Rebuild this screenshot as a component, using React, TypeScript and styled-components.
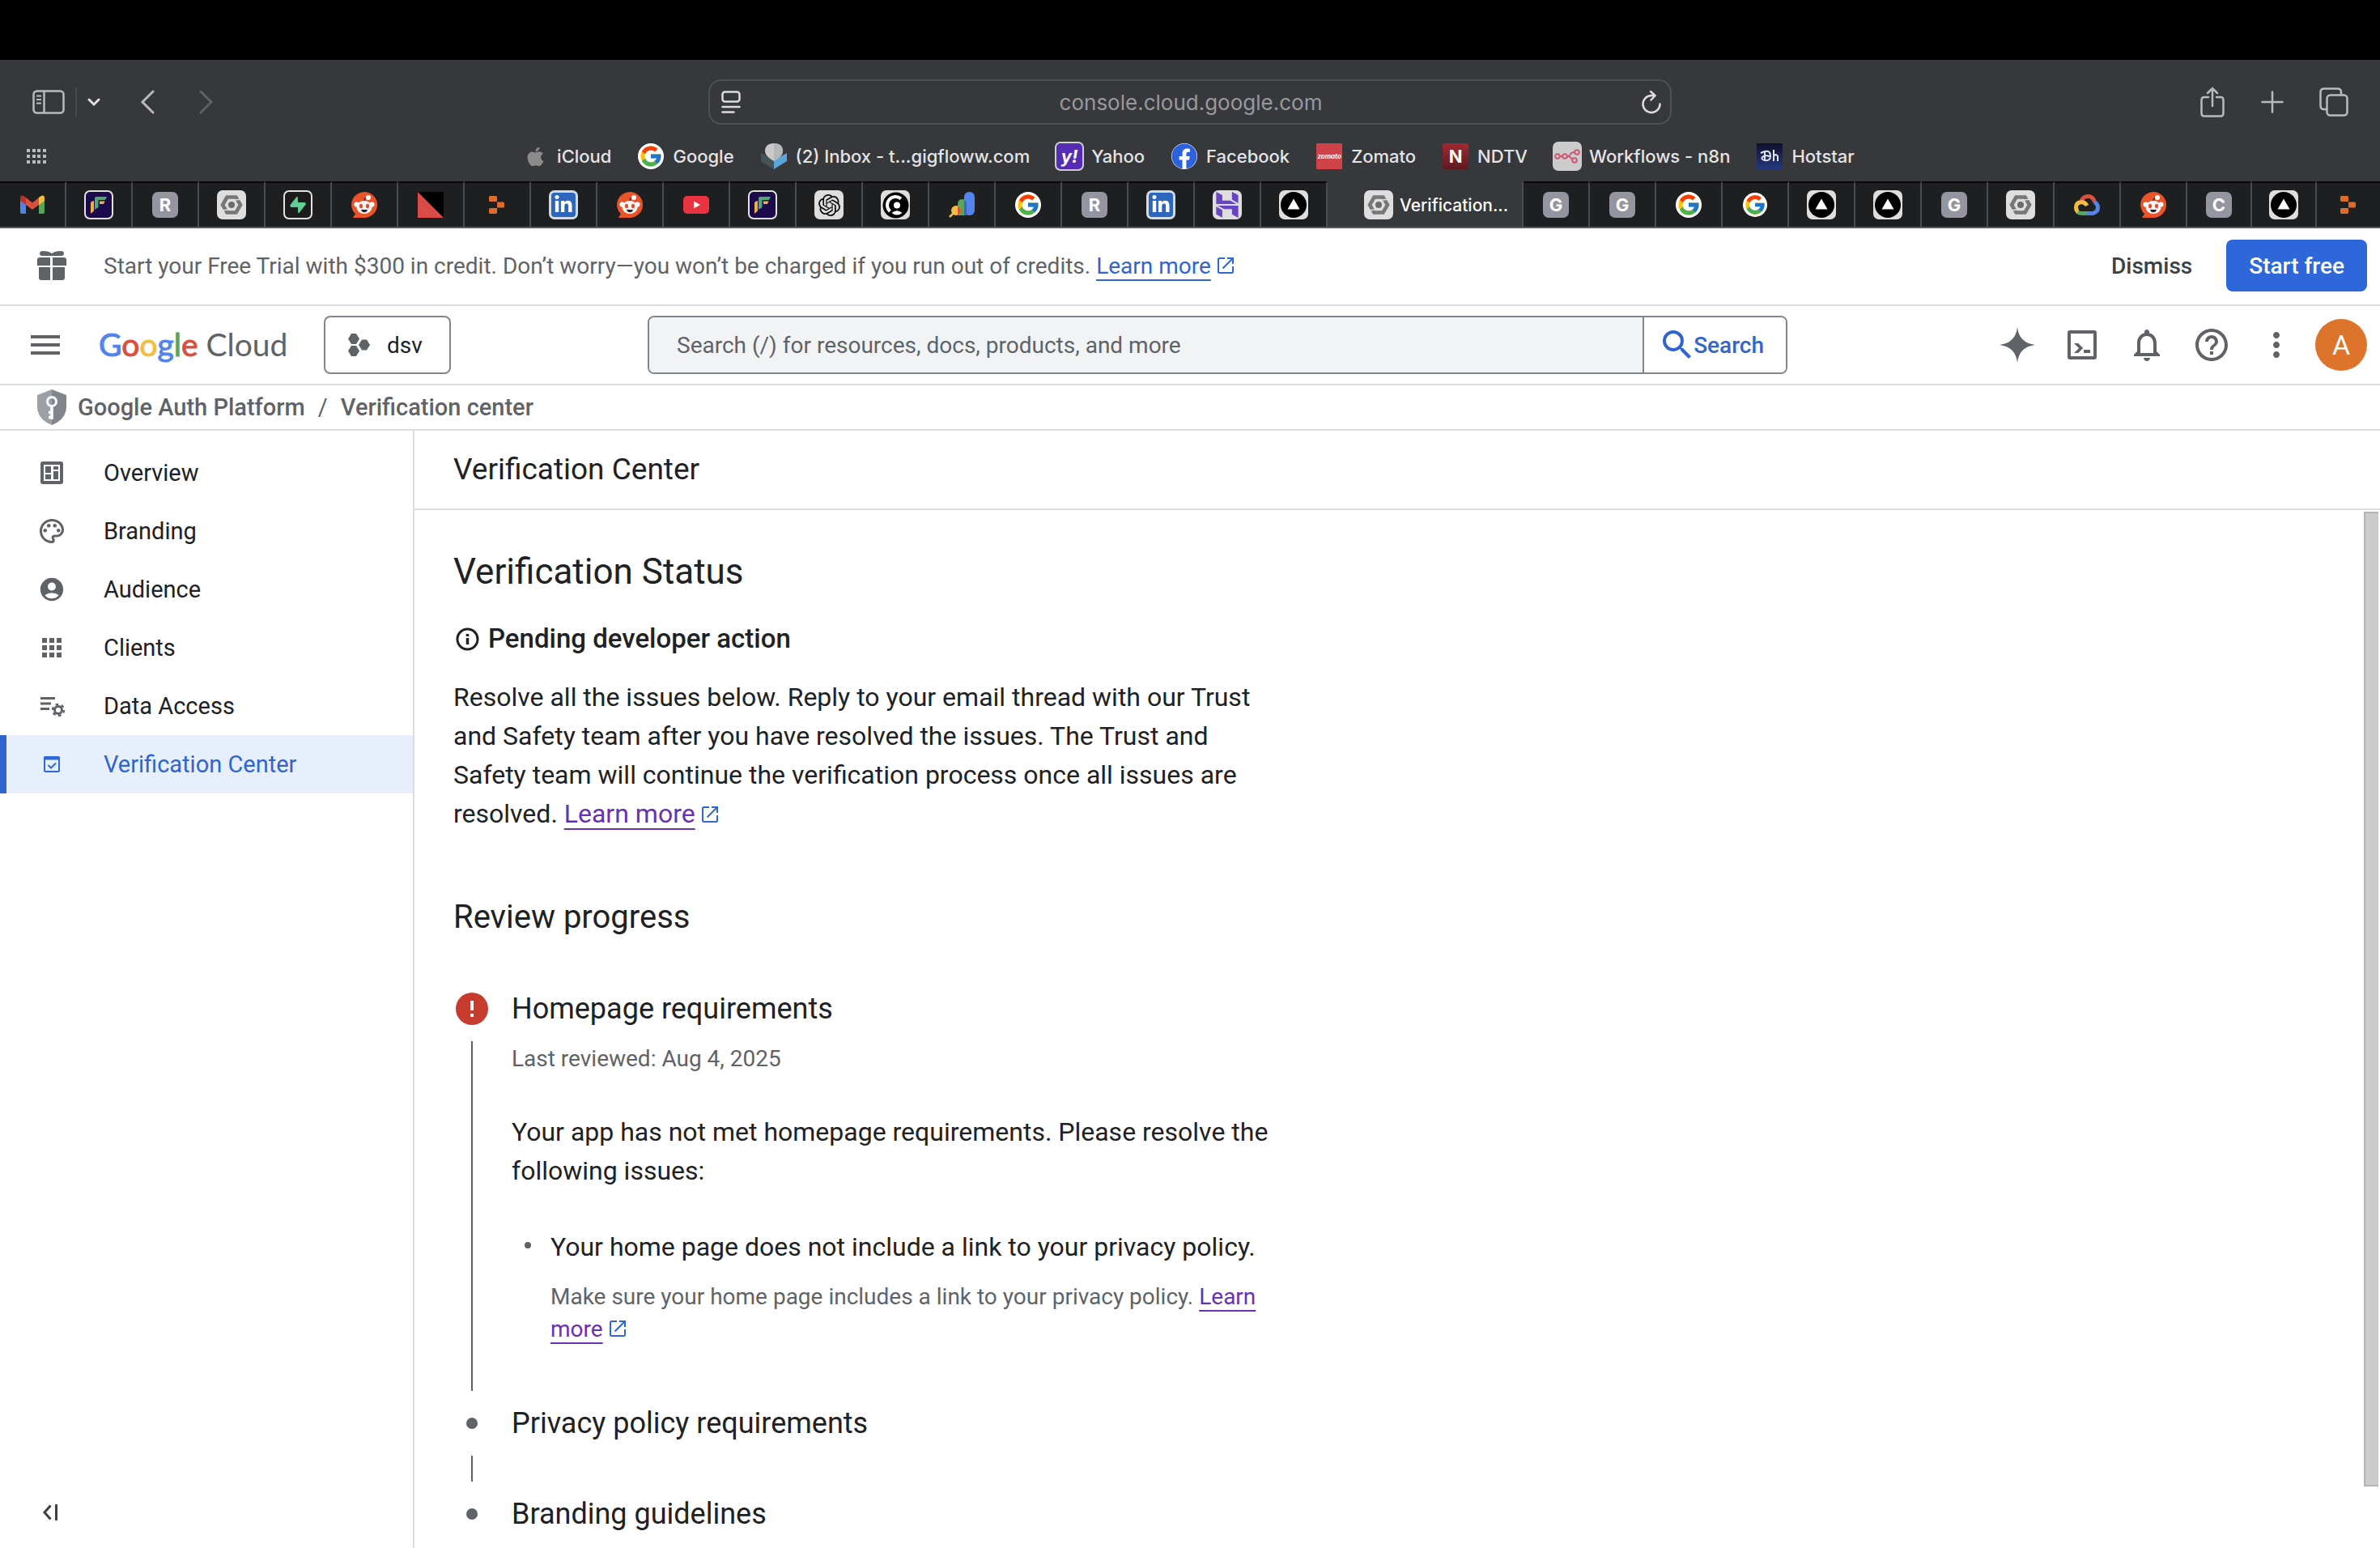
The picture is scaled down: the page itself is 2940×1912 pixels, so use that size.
import React from "react";
import styled, { createGlobalStyle, css } from "styled-components";
import { FcGoogle } from "react-icons/fc";
import { FaApple, FaFacebook, FaLinkedinIn } from "react-icons/fa";
import { SiHostinger, SiOpenai, SiSupabase } from "react-icons/si";
import {
  MdAccountCircle,
  MdApps,
  MdHelpOutline,
  MdMenu,
  MdMoreVert,
  MdOutlineNotifications,
  MdOutlinePalette,
  MdSearch,
} from "react-icons/md";

const c = {
  chrome: "#37383c",
  tab: "#1e1f21",
  tabLine: "#4b4c4e",
  line: "#dadce0",
  ink: "#202124",
  grey: "#5f6368",
  outline: "#80868b",
  blue: "#3064cf",
  button: "#2e67d9",
  visited: "#6b2fb5",
  tile: "#dedede",
};

const ui = `Roboto, "Noto Sans", sans-serif`;
const system = `Inter, "Liberation Sans", sans-serif`;

const GlobalStyle = createGlobalStyle`
  * { box-sizing: border-box; }
  body { margin: 0; background: #fff; color: ${c.ink}; font-family: ${ui}; }
  button, input { font: inherit; color: inherit; margin: 0; }
  h1, h2, h3, p, ul, ol { margin: 0; padding: 0; font-weight: 400; }
  ul, ol { list-style: none; }
  svg { display: block; flex: none; }
`;

const Page = styled.div`
  display: flex;
  flex-direction: column;
  height: 100vh;
  overflow: hidden;
`;

/* ---------- browser window ---------- */

const MenuStrip = styled.div`
  flex: none;
  height: 74px;
  background: #000;
`;

const Chrome = styled.div`
  flex: none;
  background: ${c.chrome};
  font-family: ${system};
  color: #e4e4e5;
`;

const Toolbar = styled.div`
  display: grid;
  grid-template-columns: 1fr minmax(0, 1190px) 1fr;
  align-items: center;
  height: 104px;
  padding: 0 31px;
`;

const ToolGroup = styled.div<{ $end?: boolean }>`
  display: flex;
  align-items: center;
  justify-content: ${(p) => (p.$end ? "flex-end" : "flex-start")};
  gap: ${(p) => (p.$end ? "26px" : "4px")};
`;

const ToolButton = styled.button<{ $w: number; $dim?: boolean }>`
  display: flex;
  align-items: center;
  justify-content: center;
  width: ${(p) => p.$w}px;
  height: 48px;
  padding: 0;
  border: 0;
  background: none;
  color: ${(p) => (p.$dim ? "#606165" : "#b9babc")};
`;

const ToolDivider = styled.span`
  width: 2px;
  height: 36px;
  background: #48494d;
`;

const AddressBar = styled.div`
  display: flex;
  align-items: center;
  height: 56px;
  padding: 0 10px 0 14px;
  border: 2px solid #4f5053;
  border-radius: 16px;
`;

const Address = styled.input`
  flex: 1;
  min-width: 0;
  border: 0;
  background: none;
  outline: 0;
  text-align: center;
  font-size: 26px;
  color: #98999c;
`;

const Bookmarks = styled.nav`
  display: grid;
  grid-template-columns: 1fr auto 1fr;
  align-items: center;
  height: 46px;
  padding: 0 38px 16px 32px;
`;

const BookmarkList = styled.div`
  display: flex;
  align-items: center;
  gap: 31px;
  height: 30px;
`;

const Bookmark = styled.a`
  display: flex;
  align-items: center;
  gap: 9px;
  font-size: 22px;
  font-weight: 500;
  color: #e4e4e5;
  text-decoration: none;
  white-space: nowrap;
`;

const IconSlot = styled.span`
  display: flex;
  align-items: center;
  justify-content: center;
  width: 36px;
  height: 36px;
  flex: none;
`;

const Tabs = styled.div`
  display: flex;
  height: 58px;
  border-bottom: 2px solid #58595b;
`;

const Tab = styled.button<{ $active?: boolean }>`
  display: flex;
  align-items: center;
  justify-content: center;
  gap: 8px;
  min-width: 0;
  padding: 0;
  border: 0;
  border-right: 2px solid ${c.tabLine};
  border-top: 2px solid #08080a;
  background: ${c.tab};
  color: #fff;
  font-size: 21px;
  font-weight: 500;
  white-space: nowrap;
  flex: none;
  width: 82px;
  ${(p) =>
    p.$active &&
    css`
      width: 242px;
      padding-left: 28px;
      background: ${c.chrome};
      border-top-color: ${c.chrome};
    `}
  &:nth-last-child(-n + 3) { flex: 1; }
  &:last-child { border-right: 0; }
`;

const Tile = styled.span<{ $bg: string; $size?: number; $round?: number; $edge?: string }>`
  display: flex;
  align-items: center;
  justify-content: center;
  width: ${(p) => p.$size ?? 36}px;
  height: ${(p) => p.$size ?? 36}px;
  border-radius: ${(p) => p.$round ?? 7}px;
  border: ${(p) => (p.$edge ? `2px solid ${p.$edge}` : "0")};
  background: ${(p) => p.$bg};
  overflow: hidden;
  flex: none;
`;

const Monogram = styled.span<{ $size?: number; $italic?: boolean }>`
  color: #fff;
  font-family: ${system};
  font-size: ${(p) => p.$size ?? 22}px;
  font-weight: 700;
  font-style: ${(p) => (p.$italic ? "italic" : "normal")};
  line-height: 1;
`;

/* ---------- favicons ---------- */

const Letter = ({ ch }: { ch: string }) => (
  <Tile $bg="#9595a1" $size={32}>
    <Monogram>{ch}</Monogram>
  </Tile>
);

const GoogleDisc = ({ size = 32 }: { size?: number }) => (
  <Tile $bg="#fff" $size={size} $round={16}>
    <FcGoogle size={size - 2} />
  </Tile>
);

const Gmail = () => (
  <svg width="30" height="24" viewBox="0 0 30 24">
    <path d="M0 4v17q0 2 2 2h5V10z" fill="#4f83ec" />
    <path d="M30 4v17q0 2-2 2h-5V10z" fill="#58a65c" />
    <path d="M23 3l2.200-1.700Q30-1 30 4v3l-7 5z" fill="#f2be42" />
    <path d="M7 3L4.800 1.300Q0-1 0 4v3l7 5z" fill="#b5332a" />
    <path d="M7 3l8 6.500L23 3v9l-8 6-8-6z" fill="#d95040" />
  </svg>
);

const FlowMark = () => (
  <Tile $bg="#1c0a4c" $edge="#e2e2e2">
    <svg width="32" height="32" viewBox="0 0 32 32">
      <path d="M13 6h13l-2 4h-8.500v9L11 22V8q0-2 2-2z" fill="#4fa873" />
      <path d="M10 11v12.500L6 27V14q0-2 4-3zM17 11.500h6.500l-1.500 3.500h-5z" fill="#eeb03f" />
    </svg>
  </Tile>
);

const AuthNut = () => (
  <Tile $bg={c.tile}>
    <svg width="28" height="26" viewBox="0 0 28 26" fill="none">
      <path d="M8.500 3.500h11L25 13l-5.500 9.500h-11L3 13z" stroke="#777" strokeWidth="4.600" />
      <path d="M18 7l9-1M1 20l9-1" stroke={c.tile} strokeWidth="1.500" />
      <circle cx="14" cy="13" r="4" fill="#6b6b6b" />
    </svg>
  </Tile>
);

const Supabase = () => (
  <Tile $bg="#1c1c1c" $edge="#e2e2e2">
    <SiSupabase size={20} color="#5fcf94" />
  </Tile>
);

const Reddit = () => (
  <svg width="32" height="32" viewBox="0 0 32 32">
    <path d="M16 0a16 16 0 1 1 0 32H3.500q-2 0-.8-1.500L5 27.500A16 16 0 0 1 16 0z" fill="#ea5428" />
    <path d="M16 11q1-5 6-4" fill="none" stroke="#6b2417" strokeWidth="1.500" />
    <circle cx="21" cy="7" r="3" fill="#fff" />
    <circle cx="6.500" cy="15.500" r="3" fill="#fff" />
    <circle cx="25.500" cy="15.500" r="3" fill="#fff" />
    <ellipse cx="16" cy="19" rx="9.500" ry="8" fill="#f4f6f8" />
    <ellipse cx="12" cy="17.500" rx="2" ry="2.800" fill="#e8482a" />
    <ellipse cx="20" cy="17.500" rx="2" ry="2.800" fill="#e8482a" />
    <path d="M12 22h8q-1 3.200-4 3.200T12 22z" fill="#222" />
  </svg>
);

const RedCorner = () => (
  <svg width="32" height="32" viewBox="0 0 32 32">
    <path d="M0 0h32v32H0z" fill="#000" />
    <path d="M0 0v32h32z" fill="#db4b45" />
  </svg>
);

const Replit = () => (
  <svg width="20" height="22" viewBox="0 0 20 22" fill="#e06c2c">
    <path d="M1.500 0h7Q10 0 10 1.500V7H1.500Q0 7 0 5.500v-4Q0 0 1.500 0zM10 7.500h7.500Q19 7.500 19 9v4q0 1.500-1.500 1.500H10zM1.500 15H10v5.500Q10 22 8.500 22h-7Q0 22 0 20.500v-4Q0 15 1.500 15z" />
  </svg>
);

const LinkedIn = () => (
  <Tile $bg="#d5dbe4">
    <Tile $bg="#2d66bd" $size={30} $round={4}>
      <FaLinkedinIn size={24} color="#fff" />
    </Tile>
  </Tile>
);

const YouTube = () => (
  <svg width="32" height="22" viewBox="0 0 32 22">
    <rect width="32" height="22" rx="5" fill="#ea3340" />
    <path d="M13 6.500v9l8-4.500z" fill="#fff" />
  </svg>
);

const OpenAI = () => (
  <Tile $bg={c.tile}>
    <SiOpenai size={27} color="#111" />
  </Tile>
);

const DarkC = () => (
  <Tile $bg={c.tile}>
    <svg width="33" height="33" viewBox="0 0 33 33">
      <circle cx="16.500" cy="16.500" r="16" fill="#000" />
      <path d="M23 8.500A10 10 0 1 0 9.500 24" fill="none" stroke="#fff" strokeWidth="4" />
      <circle cx="18" cy="16.500" r="4" fill="#fff" />
      <path d="M11.500 26q6.500-5.500 13 0-6.500 5-13 0z" fill="#fff" />
    </svg>
  </Tile>
);

const AdChart = () => (
  <svg width="34" height="32" viewBox="0 0 34 32">
    <rect x="20" y="0" width="13" height="29" rx="6" fill="#5383ec" />
    <path d="M12 15q0-6 6-6 5 0 5 6v14H12z" fill="#58a55c" />
    <path d="M20 10q3 1 3 5v14h-3z" fill="#3b66bb" />
    <circle cx="10" cy="23" r="6" fill="#f2bd42" />
    <path d="M12 18q4 1 4 5t-4 6z" fill="#dd5144" />
    <path d="M7 26l-5 5" stroke="#f2bd42" strokeWidth="2.500" />
  </svg>
);

const Hostinger = () => (
  <Tile $bg={c.tile}>
    <SiHostinger size={32} color="#6644c4" />
  </Tile>
);

const Triangle = () => (
  <Tile $bg={c.tile}>
    <svg width="32" height="32" viewBox="0 0 32 32">
      <circle cx="16" cy="16" r="16" fill="#000" />
      <path d="M16 8.500l7.500 13h-15z" fill="#fff" />
    </svg>
  </Tile>
);

const CloudMark = () => (
  <svg width="32" height="26" viewBox="0 0 32 26">
    <path d="M9 8Q12 2.500 17 2.500q7 0 8.500 7.500" fill="none" stroke="#d85140" strokeWidth="5" />
    <path d="M25 9.500q4.500 2 4.500 7t-6 7H16" fill="none" stroke="#5383ec" strokeWidth="5" />
    <path d="M16 23.500H9q-3 0-5-2" fill="none" stroke="#58a55c" strokeWidth="5" />
    <path d="M5 21.500Q2.500 20 2.500 16q0-6 7-6.500 4.500.5 6.500 4.500" fill="none" stroke="#f1be42" strokeWidth="5" />
  </svg>
);

const InboxMark = () => (
  <svg width="34" height="32" viewBox="0 0 34 32">
    <path d="M1 12l16 9v11L1 22z" fill="#46545a" />
    <path d="M33 12l-16 9v11l16-10z" fill="#5aa5dc" />
    <path d="M17 0q11 0 11 10 0 6-11 12Q6 16 6 10 6 0 17 0z" fill="#c9c9c9" />
    <path d="M17 0q11 0 11 10 0 6-11 12z" fill="#b5b7b9" />
  </svg>
);

const NodesMark = () => (
  <Tile $bg="#cccccc">
    <svg width="32" height="18" viewBox="0 0 32 18" fill="none" stroke="#cf5874" strokeWidth="2">
      <circle cx="4" cy="9" r="2.800" />
      <circle cx="13" cy="9" r="2.800" />
      <circle cx="28" cy="4" r="2.800" />
      <circle cx="25" cy="14" r="2.800" />
      <path d="M7 9h3M16 9q3 0 4-2.500T25 4M16 9q4 0 6 4" />
    </svg>
  </Tile>
);

const before = [
  Gmail, FlowMark, () => <Letter ch="R" />, AuthNut, Supabase, Reddit, RedCorner, Replit, LinkedIn, Reddit,
  YouTube, FlowMark, OpenAI, DarkC, AdChart, () => <GoogleDisc />, () => <Letter ch="R" />, LinkedIn, Hostinger, Triangle,
];
const after = [
  () => <Letter ch="G" />, () => <Letter ch="G" />, () => <GoogleDisc />, () => <GoogleDisc size={30} />, Triangle, Triangle,
  () => <Letter ch="G" />, AuthNut, CloudMark, Reddit, () => <Letter ch="C" />, Triangle, Replit,
];

const bookmarks: { label: string; icon: React.ReactNode }[] = [
  { label: "iCloud", icon: <FaApple size={27} color="#8b8b8c" /> },
  { label: "Google", icon: <GoogleDisc /> },
  { label: "(2) Inbox - t...gigfloww.com", icon: <InboxMark /> },
  { label: "Yahoo", icon: <Tile $bg="#552db4" $edge="#cfcfcf"><Monogram $italic>y!</Monogram></Tile> },
  { label: "Facebook", icon: <Tile $bg="#fff" $size={32} $round={16}><FaFacebook size={32} color="#2e62dc" /></Tile> },
  { label: "Zomato", icon: <Tile $bg="#d0424a" $size={32} $round={1}><Monogram $size={8} $italic>zomato</Monogram></Tile> },
  { label: "NDTV", icon: <Tile $bg="linear-gradient(#a02a33, #5e1b20)" $size={32} $round={3}><Monogram>N</Monogram></Tile> },
  { label: "Workflows - n8n", icon: <NodesMark /> },
  {
    label: "Hotstar",
    icon: (
      <Tile $bg="linear-gradient(#0f0f2b, #26397f)" $size={32} $round={1}>
        <svg width="26" height="18" viewBox="0 0 26 18" fill="none" stroke="#dfe3ee" strokeWidth="2">
          <path d="M2 5q12-6 12 4 0 6-7 5-5-1-3-4 3-3 9-1M7 3v12M18 1v14M18 9q3-4 5 0v6" />
        </svg>
      </Tile>
    ),
  },
];

/* ---------- console ---------- */

const Trial = styled.div`
  flex: none;
  display: flex;
  align-items: center;
  gap: 46px;
  padding: 14px 16px 16px 46px;
  border-bottom: 2px solid ${c.line};
  font-size: 28px;
  color: ${c.grey};
`;

const TrialText = styled.p`
  flex: 1;
`;

const Actions = styled.div`
  display: flex;
  gap: 14px;
`;

const ActionButton = styled.button<{ $primary?: boolean }>`
  height: 64px;
  padding: 0 28px;
  border: 0;
  border-radius: 8px;
  background: ${(p) => (p.$primary ? c.button : "none")};
  color: ${(p) => (p.$primary ? "#fff" : "#3c4043")};
  font-weight: 500;
`;

const TextLink = styled.a<{ $visited?: boolean }>`
  color: ${(p) => (p.$visited ? c.visited : c.blue)};
  text-decoration: none;
`;

const Underlined = styled.span`
  text-decoration: underline;
  text-decoration-thickness: 2px;
  text-decoration-skip-ink: none;
  text-underline-offset: 7px;
`;

const OutIcon = styled.svg`
  display: inline-block;
  margin-left: 8px;
  vertical-align: baseline;
  color: ${c.button};
`;

const LearnMore = ({ visited }: { visited?: boolean }) => (
  <TextLink href="#learn" $visited={visited}>
    <Underlined>Learn more</Underlined>
    <OutIcon width="20" height="20" viewBox="0 0 20 20" fill="none" stroke="currentColor" strokeWidth="2">
      <path d="M9 1H2.500Q1 1 1 2.500v15Q1 19 2.500 19h15q1.500 0 1.500-1.500V11M12 1h7v7M18.500 1.500L6.500 13.500" />
    </OutIcon>
  </TextLink>
);

const Header = styled.header`
  flex: none;
  display: flex;
  align-items: center;
  height: 98px;
  border-bottom: 2px solid ${c.line};
  font-size: 28px;
`;

const HeaderLeft = styled.div`
  display: flex;
  align-items: center;
  width: 800px;
  padding-left: 32px;
  flex: none;
`;

const BareButton = styled.button<{ $w?: number }>`
  display: flex;
  align-items: center;
  justify-content: center;
  width: ${(p) => p.$w ?? 48}px;
  height: 64px;
  padding: 0;
  border: 0;
  background: none;
  color: ${c.grey};
`;

const Logo = styled.a`
  width: 278px;
  margin-left: 42px;
  padding-bottom: 2px;
  font-family: Lato, ${ui};
  font-size: 39px;
  line-height: 48px;
  color: ${c.grey};
  text-decoration: none;
  white-space: nowrap;
`;

const Ink = styled.span<{ $c: string }>`
  color: ${(p) => p.$c};
  -webkit-text-stroke: 1px ${(p) => p.$c};
`;

const ProjectButton = styled.button`
  display: flex;
  align-items: center;
  gap: 20px;
  height: 72px;
  padding: 0 33px 0 28px;
  border: 2px solid ${c.outline};
  border-radius: 8px;
  background: #fff;
`;

const SearchForm = styled.form`
  display: flex;
  flex: 1;
  max-width: 1408px;
  height: 72px;
  border: 2px solid ${c.outline};
  border-radius: 8px;
  overflow: hidden;
`;

const SearchInput = styled.input`
  flex: 1;
  min-width: 0;
  padding: 0 34px;
  border: 0;
  outline: 0;
  background: #f1f3f4;
  &::placeholder { color: ${c.grey}; opacity: 1; }
`;

const SearchButton = styled.button`
  display: flex;
  align-items: center;
  gap: 2px;
  padding: 0 27px 0 23px;
  border: 0;
  border-left: 2px solid ${c.outline};
  background: #fff;
  color: ${c.blue};
  font-weight: 500;
`;

const HeaderRight = styled.div`
  display: flex;
  align-items: center;
  margin-left: auto;
  padding-right: 16px;
`;

const Avatar = styled.button`
  width: 64px;
  height: 64px;
  margin-left: 8px;
  padding: 0;
  border: 0;
  border-radius: 50%;
  background: #de732c;
  color: #fff;
  font-size: 34px;
`;

const Crumbs = styled.nav`
  flex: none;
  display: flex;
  align-items: center;
  height: 56px;
  padding-left: 46px;
  border-bottom: 2px solid ${c.line};
  font-size: 29px;
  font-weight: 500;
  color: ${c.grey};
`;

const Crumb = styled.a`
  margin-left: 14px;
  color: inherit;
  text-decoration: none;
`;

const Slash = styled.span`
  margin: 0 2px 0 16px;
  font-weight: 400;
`;

const Body = styled.div`
  flex: 1;
  display: flex;
  min-height: 0;
`;

const Sidebar = styled.aside`
  flex: none;
  display: flex;
  flex-direction: column;
  justify-content: space-between;
  width: 512px;
  padding: 16px 0 20px;
  border-right: 2px solid ${c.line};
`;

const NavItem = styled.a<{ $active?: boolean }>`
  display: flex;
  align-items: center;
  gap: 46px;
  height: 72px;
  padding-left: 38px;
  border-left: 8px solid ${(p) => (p.$active ? c.blue : "transparent")};
  background: ${(p) => (p.$active ? "#e8effc" : "none")};
  color: ${(p) => (p.$active ? c.blue : c.ink)};
  font-size: 29px;
  text-decoration: none;
  svg { color: ${(p) => (p.$active ? c.button : c.grey)}; }
`;

const CollapseButton = styled(BareButton)`
  margin-left: 38px;
  height: 48px;
  color: #3c4043;
`;

const Main = styled.main`
  flex: 1;
  display: flex;
  flex-direction: column;
  min-width: 0;
`;

const TitleBar = styled.div`
  flex: none;
  display: flex;
  align-items: center;
  height: 98px;
  padding-left: 48px;
  border-bottom: 2px solid ${c.line};
`;

const Heading = styled.h2<{ $size: number; $line: number }>`
  font-size: ${(p) => p.$size}px;
  line-height: ${(p) => p.$line}px;
`;

const Scroller = styled.div`
  flex: 1;
  display: flex;
  justify-content: space-between;
  min-height: 0;
  overflow: hidden;
`;

const Content = styled.div`
  width: 1068px;
  padding: 50px 0 0 48px;
`;

const Status = styled.p`
  display: flex;
  align-items: center;
  gap: 8px;
  margin: 38px 0 29px;
  font-size: 33px;
  line-height: 38px;
  font-weight: 500;
`;

const Paragraph = styled.p`
  font-size: 32px;
  line-height: 48px;
`;

const Small = styled.p`
  font-size: 28px;
  line-height: 40px;
  color: ${c.grey};
`;

const Progress = styled.section`
  margin-top: 80px;
`;

const Steps = styled.ol`
  margin-top: 69px;
`;

const Step = styled.li`
  display: flex;
  gap: 26px;
`;

const Rail = styled.div`
  display: flex;
  flex-direction: column;
  align-items: center;
  width: 46px;
  flex: none;
`;

const Marker = styled.span`
  display: flex;
  align-items: center;
  justify-content: center;
  height: 40px;
`;

const Dot = styled.span<{ $size: number }>`
  width: ${(p) => p.$size}px;
  height: ${(p) => p.$size}px;
  border-radius: 50%;
  background: ${c.grey};
`;

const Track = styled.span`
  flex: 1;
  width: 2px;
  min-height: 32px;
  margin: 20px 0;
  background: ${c.grey};
`;

const StepBody = styled.div`
  flex: 1;
  min-width: 0;
`;

const Detail = styled.div`
  display: flex;
  flex-direction: column;
  gap: 46px;
  padding: 22px 0 76px;
`;

const Issue = styled.li`
  display: grid;
  grid-template-columns: 48px 1fr;
  row-gap: 18px;
  ${Dot} { margin: 18px 0 0 16px; }
  ${Small} { grid-column: 2; }
`;

const ScrollThumb = styled.div`
  flex: none;
  width: 18px;
  margin: 2px 2px 76px 0;
  border: 2px solid #b4b4b4;
  border-right: 0;
  background: #cbcbcb;
`;

const navItems: { label: string; icon: React.ReactNode; active?: boolean }[] = [
  {
    label: "Overview",
    icon: (
      <svg width="36" height="36" viewBox="0 0 36 36" fill="currentColor">
        <path
          fillRule="evenodd"
          d="M7 4h22q3 0 3 3v22q0 3-3 3H7q-3 0-3-3V7q0-3 3-3zM8 8v20h20V8z"
        />
        <path d="M10 10h7v8h-7zM10 20h7v6h-7zM20 10h6v4h-6zM20 16h6v10h-6z" />
      </svg>
    ),
  },
  { label: "Branding", icon: <MdOutlinePalette size={36} /> },
  { label: "Audience", icon: <MdAccountCircle size={34} /> },
  { label: "Clients", icon: <MdApps size={36} /> },
  {
    label: "Data Access",
    icon: (
      <svg width="36" height="36" viewBox="0 0 36 36" fill="none" stroke="currentColor">
        <path d="M4 8.500h18M4 15h13M4 21.500h11" strokeWidth="3" />
        <circle cx="26" cy="23" r="4.500" strokeWidth="3" />
        <circle cx="26" cy="23" r="7" strokeWidth="2.500" strokeDasharray="3.600 3.730" />
      </svg>
    ),
  },
  {
    label: "Verification Center",
    active: true,
    icon: (
      <svg width="36" height="36" viewBox="0 0 36 36" fill="none" stroke="currentColor" strokeWidth="2">
        <rect x="9" y="9" width="18" height="18" rx="1.500" />
        <path d="M8 10.500h20" strokeWidth="4" />
        <path d="M13.500 19l3.500 3.500 6-6" />
      </svg>
    ),
  },
];

export default function App() {
  return (
    <Page>
      <GlobalStyle />
      <MenuStrip />
      <Chrome>
        <Toolbar>
          <ToolGroup>
            <ToolButton $w={58} aria-label="Show sidebar">
              <svg width="40" height="30" viewBox="0 0 40 30" fill="none" stroke="currentColor" strokeWidth="2.500">
                <rect x="1.500" y="1.500" width="37" height="27" rx="4" />
                <path d="M14.500 2v26" />
                <path d="M5 7.500h6M5 12h6M5 16.500h6" strokeWidth="2" />
              </svg>
            </ToolButton>
            <ToolDivider />
            <ToolButton $w={34} aria-label="Tab groups">
              <svg width="16" height="11" viewBox="0 0 16 11" fill="none" stroke="#dedede" strokeWidth="3" strokeLinecap="round">
                <path d="M2 2l6 6 6-6" />
              </svg>
            </ToolButton>
            <ToolButton $w={90} aria-label="Back">
              <svg width="18" height="30" viewBox="0 0 18 30" fill="none" stroke="currentColor" strokeWidth="3" strokeLinecap="round">
                <path d="M16 2L3 15l13 13" />
              </svg>
            </ToolButton>
            <ToolButton $w={48} $dim aria-label="Forward">
              <svg width="18" height="30" viewBox="0 0 18 30" fill="none" stroke="currentColor" strokeWidth="3" strokeLinecap="round">
                <path d="M2 2l13 13L2 28" />
              </svg>
            </ToolButton>
          </ToolGroup>
          <AddressBar>
            <svg width="24" height="28" viewBox="0 0 24 28" fill="none" stroke="#dcdcdd" strokeWidth="2.500" strokeLinecap="round">
              <rect x="1.500" y="1.500" width="21" height="12" rx="3" />
              <path d="M1.500 20h21M1.500 26.500h14" />
            </svg>
            <Address aria-label="Address" defaultValue="console.cloud.google.com" />
            <svg width="26" height="30" viewBox="0 0 26 30" fill="none" stroke="#dcdcdd" strokeWidth="2.500" strokeLinecap="round">
              <path d="M15.500 7H13a10.500 10.500 0 1 0 10.500 10.500" />
              <path d="M12 2l5.500 5-5 5.500" />
            </svg>
          </AddressBar>
          <ToolGroup $end>
            <ToolButton $w={48} aria-label="Share">
              <svg width="30" height="38" viewBox="0 0 30 38" fill="none" stroke="currentColor" strokeWidth="2.500" strokeLinecap="round">
                <path d="M10 13H5q-3.500 0-3.500 3.500V33q0 3.500 3.500 3.500h20q3.500 0 3.500-3.500V16.500Q28.500 13 25 13h-5M15 24V2M9 8l6-6 6 6" />
              </svg>
            </ToolButton>
            <ToolButton $w={48} aria-label="New tab">
              <svg width="28" height="28" viewBox="0 0 28 28" fill="none" stroke="currentColor" strokeWidth="2.500" strokeLinecap="round">
                <path d="M14 1.500v25M1.500 14h25" />
              </svg>
            </ToolButton>
            <ToolButton $w={52} aria-label="Show all tabs">
              <svg width="36" height="36" viewBox="0 0 36 36" fill="none" stroke="currentColor" strokeWidth="2.500">
                <rect x="9.500" y="9.500" width="25" height="25" rx="4" />
                <path d="M9 27H6q-4.500 0-4.500-4.500V6Q1.500 1.500 6 1.500h16.500Q27 1.500 27 6v3" />
              </svg>
            </ToolButton>
          </ToolGroup>
        </Toolbar>
        <Bookmarks>
          <svg width="26" height="18" viewBox="0 0 26 18" fill="#b9babc">
            {[0, 7, 14].map((y) => [1, 8, 14, 21].map((x) => <rect key={`${x}-${y}`} x={x} y={y} width="4" height="4" />))}
          </svg>
          <BookmarkList>
            {bookmarks.map((b) => (
              <Bookmark key={b.label} href="#bookmark">
                <IconSlot>{b.icon}</IconSlot>
                {b.label}
              </Bookmark>
            ))}
          </BookmarkList>
        </Bookmarks>
        <Tabs>
          {before.map((Icon, i) => (
            <Tab key={i} aria-label={`Tab ${i + 1}`}>
              <Icon />
            </Tab>
          ))}
          <Tab $active>
            <AuthNut />
            Verification...
          </Tab>
          {after.map((Icon, i) => (
            <Tab key={i} aria-label={`Tab ${i + 22}`}>
              <Icon />
            </Tab>
          ))}
        </Tabs>
      </Chrome>

      <Trial>
        <svg width="36" height="36" viewBox="0 0 36 36" fill="currentColor">
          <path d="M18 6Q14 6 6 6 3 6 3 3T7 0q7 0 11 3 4-3 11-3 4 0 4 3t-3 3z" />
          <path d="M3 8h13v10H0v-7q0-3 3-3zM19 8h14q3 0 3 3v7H19zM2 20h14v16H5q-3 0-3-3zM19 20h15v13q0 3-3 3H19z" />
        </svg>
        <TrialText>
          Start your Free Trial with $300 in credit. Don’t worry—you won’t be charged if you run out of credits. <LearnMore />
        </TrialText>
        <Actions>
          <ActionButton>Dismiss</ActionButton>
          <ActionButton $primary>Start free</ActionButton>
        </Actions>
      </Trial>

      <Header>
        <HeaderLeft>
          <BareButton aria-label="Navigation menu">
            <MdMenu size={48} />
          </BareButton>
          <Logo href="#home">
            <Ink $c="#5383ec">G</Ink>
            <Ink $c="#d85140">o</Ink>
            <Ink $c="#f1be42">o</Ink>
            <Ink $c="#5383ec">g</Ink>
            <Ink $c="#58a55c">l</Ink>
            <Ink $c="#d85140">e</Ink> Cloud
          </Logo>
          <ProjectButton>
            <svg width="28" height="30" viewBox="0 0 28 30" fill={c.grey}>
              <path d="M4 1h6l4 6.500-4 6.500H4L0 7.500zM4 16h6l4 6.500-4 6.500H4l-4-6.500zM17 8.500h6l4 6.500-4 6.500h-6L13 15z" />
            </svg>
            dsv
          </ProjectButton>
        </HeaderLeft>
        <SearchForm onSubmit={(e) => e.preventDefault()}>
          <SearchInput aria-label="Search" placeholder="Search (/) for resources, docs, products, and more" />
          <SearchButton>
            <MdSearch size={36} viewBox="3 3 18 18" />
            Search
          </SearchButton>
        </SearchForm>
        <HeaderRight>
          <BareButton $w={80} aria-label="Gemini">
            <svg width="44" height="44" viewBox="0 0 44 44" fill="currentColor">
              <path d="M22 0Q24 19.500 44 22 24 24.500 22 44 20 24.500 0 22 20 19.500 22 0z" />
              <path d="M22 5q3 14 16 17-13 3-16 17Q19 25 6 22 19 19 22 5z" />
            </svg>
          </BareButton>
          <BareButton $w={80} aria-label="Cloud Shell">
            <svg width="48" height="48" viewBox="0 0 24 24" fill="currentColor">
              <path fillRule="evenodd" d="M4.500 3h15q1.500 0 1.500 1.500v15q0 1.500-1.500 1.500h-15Q3 21 3 19.500v-15Q3 3 4.500 3zM5 5v14h14V5z" />
              <path d="M7 11h2.600l3 3-3 3H7l3-3zM13 15h4v2h-4z" />
            </svg>
          </BareButton>
          <BareButton $w={80} aria-label="Notifications">
            <MdOutlineNotifications size={48} />
          </BareButton>
          <BareButton $w={80} aria-label="Help">
            <MdHelpOutline size={48} />
          </BareButton>
          <BareButton $w={80} aria-label="More">
            <MdMoreVert size={48} />
          </BareButton>
          <Avatar>A</Avatar>
        </HeaderRight>
      </Header>

      <Crumbs aria-label="Breadcrumb">
        <svg width="36" height="44" viewBox="0 0 36 44">
          <path d="M18 0L0 7v14q0 16 18 23z" fill="#9aa0a6" />
          <path d="M18 0l18 7v14q0 16-18 23z" fill="#80868b" />
          <circle cx="18" cy="15" r="5.500" fill="none" stroke="#fff" strokeWidth="3" />
          <path d="M18 20v17M18 28.500h-4M18 34.500h-4" stroke="#fff" strokeWidth="3.500" />
        </svg>
        <Crumb href="#platform">Google Auth Platform</Crumb>
        <Slash>/</Slash>
        <Crumb href="#verification">Verification center</Crumb>
      </Crumbs>

      <Body>
        <Sidebar>
          <nav>
            {navItems.map((n) => (
              <NavItem key={n.label} href="#nav" $active={n.active}>
                <IconSlot>{n.icon}</IconSlot>
                {n.label}
              </NavItem>
            ))}
          </nav>
          <CollapseButton aria-label="Collapse menu">
            <svg width="20" height="20" viewBox="0 0 20 20" fill="none" stroke="currentColor" strokeWidth="3">
              <path d="M10.500 1.500L3 10l7.500 8.500M17.500 0v20" />
            </svg>
          </CollapseButton>
        </Sidebar>

        <Main>
          <TitleBar>
            <Heading as="h1" $size={37} $line={48}>
              Verification Center
            </Heading>
          </TitleBar>
          <Scroller>
            <Content>
              <Heading $size={44} $line={52}>
                Verification Status
              </Heading>
              <Status>
                <svg width="35" height="35" viewBox="0 0 35 35" fill="none" stroke="currentColor" strokeWidth="3">
                  <circle cx="17.500" cy="17.500" r="12.500" />
                  <path d="M17.500 16v8M17.500 11v3" strokeWidth="3.500" />
                </svg>
                Pending developer action
              </Status>
              <Paragraph>
                Resolve all the issues below. Reply to your email thread with our Trust and Safety team after you have
                resolved the issues. The Trust and Safety team will continue the verification process once all issues
                are resolved. <LearnMore visited />
              </Paragraph>
              <Progress>
                <Heading $size={40} $line={48}>
                  Review progress
                </Heading>
                <Steps>
                  <Step>
                    <Rail>
                      <Marker>
                        <svg width="40" height="40" viewBox="0 0 40 40">
                          <circle cx="20" cy="20" r="20" fill="#c83c30" />
                          <path d="M18 10h4v12h-4zM18 26h4v4h-4z" fill="#fff" />
                        </svg>
                      </Marker>
                      <Track />
                    </Rail>
                    <StepBody>
                      <Heading as="h3" $size={36} $line={40}>
                        Homepage requirements
                      </Heading>
                      <Detail>
                        <Small>Last reviewed: Aug 4, 2025</Small>
                        <Paragraph>
                          Your app has not met homepage requirements. Please resolve the following issues:
                        </Paragraph>
                        <ul>
                          <Issue>
                            <Dot $size={8} />
                            <Paragraph>Your home page does not include a link to your privacy policy.</Paragraph>
                            <Small>
                              Make sure your home page includes a link to your privacy policy. <LearnMore visited />
                            </Small>
                          </Issue>
                        </ul>
                      </Detail>
                    </StepBody>
                  </Step>
                  <Step>
                    <Rail>
                      <Marker>
                        <Dot $size={14} />
                      </Marker>
                      <Track />
                    </Rail>
                    <StepBody>
                      <Heading as="h3" $size={36} $line={40}>
                        Privacy policy requirements
                      </Heading>
                    </StepBody>
                  </Step>
                  <Step>
                    <Rail>
                      <Marker>
                        <Dot $size={14} />
                      </Marker>
                    </Rail>
                    <StepBody>
                      <Heading as="h3" $size={36} $line={40}>
                        Branding guidelines
                      </Heading>
                    </StepBody>
                  </Step>
                </Steps>
              </Progress>
            </Content>
            <ScrollThumb />
          </Scroller>
        </Main>
      </Body>
    </Page>
  );
}
